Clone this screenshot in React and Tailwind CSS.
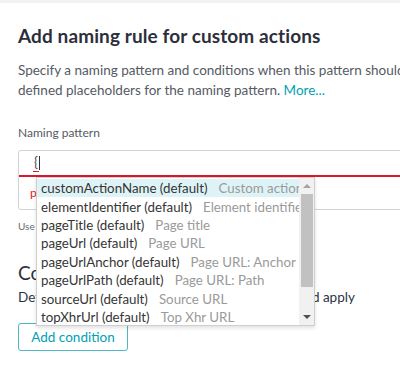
import React from "react";

const placeholders = [
  { name: "customActionName (default)", desc: "Custom action name" },
  { name: "elementIdentifier (default)", desc: "Element identifier" },
  { name: "pageTitle (default)", desc: "Page title" },
  { name: "pageUrl (default)", desc: "Page URL" },
  { name: "pageUrlAnchor (default)", desc: "Page URL: Anchor" },
  { name: "pageUrlPath (default)", desc: "Page URL: Path" },
  { name: "sourceUrl (default)", desc: "Source URL" },
  { name: "topXhrUrl (default)", desc: "Top Xhr URL" },
];

function PlaceholderList() {
  return (
    <div className="absolute left-[36px] top-[177px] w-[279px] h-[149px] bg-white border border-[#cfcfcf] shadow-[0_2px_4px_rgba(0,0,0,0.12)] flex">
      {/* Options */}
      <div className="flex-1 overflow-hidden pt-[1px]">
        {placeholders.map((p, i) => (
          <div
            key={p.name}
            className={`h-[18.4px] flex items-center gap-[11px] pl-[4px] whitespace-nowrap text-[13.3px] leading-[18px] ${
              i === 0 ? "bg-[#def3f6]" : ""
            }`}
          >
            <span className="text-[#353535]">{p.name}</span>
            <span className="text-[#9a9a9a]">{p.desc}</span>
          </div>
        ))}
      </div>

      {/* Scrollbar */}
      <div className="w-[15px] bg-[#f1f1f1] flex flex-col items-center">
        <div className="h-[16px] flex items-center justify-center">
          <div className="w-0 h-0 border-l-[4px] border-r-[4px] border-b-[4px] border-l-transparent border-r-transparent border-b-[#a3a3a3]" />
        </div>
        <div className="w-[12px] h-[93px] bg-[#c1c1c1]" />
        <div className="flex-1" />
        <div className="h-[16px] flex items-center justify-center">
          <div className="w-0 h-0 border-l-[4px] border-r-[4px] border-t-[4px] border-l-transparent border-r-transparent border-t-[#505050]" />
        </div>
      </div>
    </div>
  );
}

export default function App() {
  return (
    <div
      className="relative w-[400px] h-[365px] overflow-hidden bg-white"
      style={{ fontFamily: "Lato, 'Open Sans', sans-serif" }}
    >
      <div className="h-[3px] bg-[#f2f2f2]" />

      <div className="w-[460px] pl-[18px] pt-[21px]">
        {/* Header */}
        <h2 className="text-[19px] leading-[24px] font-bold text-[#2c2f3b] tracking-[0.1px]">
          Add naming rule for custom actions
        </h2>
        <p className="mt-[12px] whitespace-nowrap text-[13.5px] leading-[20px] text-[#555a63]">
          Specify a naming pattern and conditions when this pattern should be
          <br />
          defined placeholders for the naming pattern.{" "}
          <a href="#" className="text-[#00a1b2]">
            More...
          </a>
        </p>

        {/* Naming pattern */}
        <label className="block mt-[25px] text-[12px] leading-[16px] text-[#555a63]">
          Naming pattern
        </label>
        <div className="mt-[9px] border border-[#d2d2d2] rounded-[3px]">
          <div className="h-[26px] border-b-2 border-[#dc172a] flex items-center pl-[15px]">
            <span className="relative text-[13px] text-[#454545]">
              {"{"}
              <span className="absolute left-[-1px] right-[-1px] bottom-[1px] h-[1px] bg-[#dc172a]" />
            </span>
            <span className="ml-[1px] w-[1px] h-[14px] bg-[#333]" />
          </div>
          <div className="h-[32px] flex items-center pl-[11px] text-[12px] text-[#dc172a]">
            pattern
          </div>
        </div>
        <p className="mt-[9px] text-[10px] leading-[14px] text-[#666b73]">
          Use {"{"} for placeholders
        </p>

        {/* Conditions */}
        <h3 className="mt-[28px] text-[19px] leading-[24px] text-[#2c2f3b]">
          Conditions
        </h3>
        <p className="mt-[2px] whitespace-nowrap text-[13.5px] leading-[20px] text-[#2c3344]">
          Define conditions for when this naming rule should apply
        </p>
        <button className="mt-[16px] h-[28px] w-[110px] border border-[#4fb8c7] rounded-[3px] text-[13.5px] text-[#00a1b2]">
          Add condition
        </button>
      </div>

      <PlaceholderList />
    </div>
  );
}
